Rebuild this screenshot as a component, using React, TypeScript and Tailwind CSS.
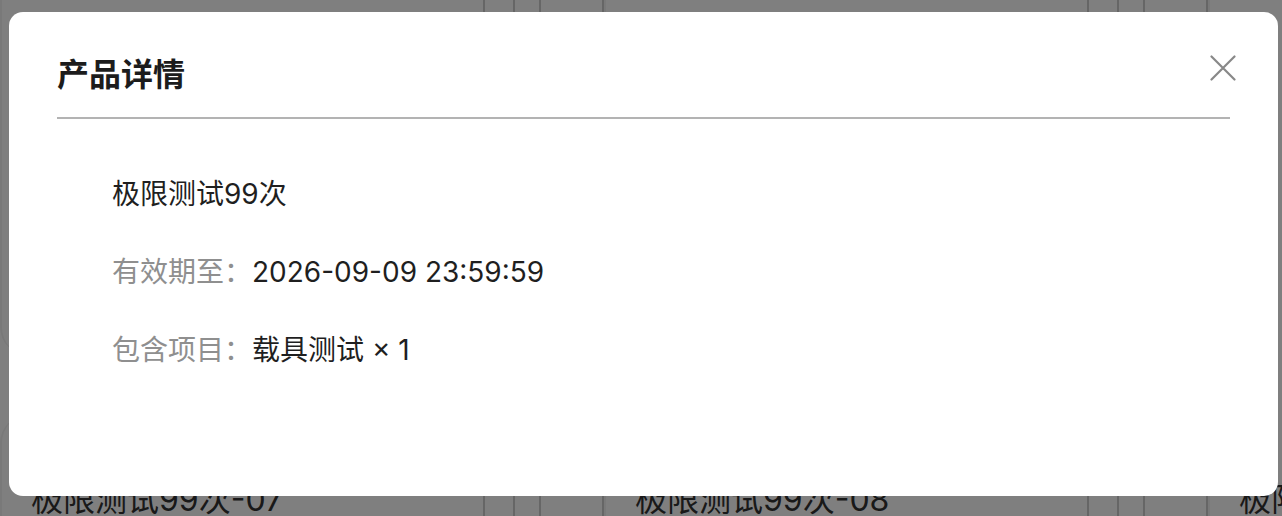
import React from 'react';

const FONT = { fontFamily: '"Inter", "Noto Sans CJK SC", sans-serif' };

type Card = { name: string };

const topCards: Card[] = [{ name: '极限测试99次-04' }, { name: '极限测试99次-05' }, { name: '极限测试99次-06' }];
const bottomCards: Card[] = [{ name: '极限测试99次-07' }, { name: '极限测试99次-08' }, { name: '极限测试99次-09' }];

function BgCard({ card, top }: { card: Card; top?: boolean }) {
    return (
        <div
            className={
                'w-[604px] shrink-0 border-l-2 border-r-2 border-l-[#f2f2f2] border-r-[#cccccc] bg-white ' +
                (top ? 'h-[370px] rounded-bl-[28px]' : 'h-[120px] rounded-tl-[28px]')
            }
        >
            <div className="flex h-full">
                <div className="flex-1 pl-[29px]">
                    {!top && <div className="pt-[66px] text-[32px] leading-[38px] whitespace-nowrap text-[#333]">{card.name}</div>}
                </div>
                <div className="w-[30px] border-l-2 border-[#cccccc]" />
                <div className="w-[26px] border-l-2 border-[#cccccc]" />
                <div className="w-[63px] border-l-2 border-[#cccccc]" />
            </div>
        </div>
    );
}

function CloseIcon() {
    return (
        <svg width="26" height="26" viewBox="0 0 26 26" fill="none">
            <path d="M1.5 1.5 24.5 24.5M24.5 1.5 1.5 24.5" stroke="#888888" strokeWidth="2.2" strokeLinecap="round" />
        </svg>
    );
}

export default function App() {
    return (
        <div className="relative h-[516px] w-[1282px] overflow-hidden bg-white" style={FONT}>
            {/* page behind the dialog */}
            <div className="flex flex-col gap-[60px]">
                <div className="-mt-[15px] flex">
                    {topCards.map(c => (
                        <BgCard key={c.name} card={c} top />
                    ))}
                </div>
                <div className="flex">
                    {bottomCards.map(c => (
                        <BgCard key={c.name} card={c} />
                    ))}
                </div>
            </div>

            {/* overlay */}
            <div className="absolute inset-0 bg-black/50" />

            {/* dialog */}
            <div className="absolute left-[9px] top-[12px] h-[484px] w-[1269px] rounded-[14px] bg-white px-[48px]">
                <div className="pt-[40px] text-[32px] font-semibold leading-[46px] text-[#1c1c1c]">产品详情</div>
                <button className="absolute right-[42px] top-[43px]">
                    <CloseIcon />
                </button>
                <div className="mt-[19px] h-[2px] bg-[#b3b3b3]" />

                <div className="flex flex-col gap-[38px] pl-[55px] pt-[55px] text-[28px] leading-[40px] text-[#1f1f1f]">
                    <div>极限测试99次</div>
                    <div className="flex">
                        <span className="text-[#8f8f8f]">有效期至：</span>
                        <span>2026-09-09 23:59:59</span>
                    </div>
                    <div className="flex">
                        <span className="text-[#8f8f8f]">包含项目：</span>
                        <span>载具测试 × 1</span>
                    </div>
                </div>
            </div>
        </div>
    );
}
